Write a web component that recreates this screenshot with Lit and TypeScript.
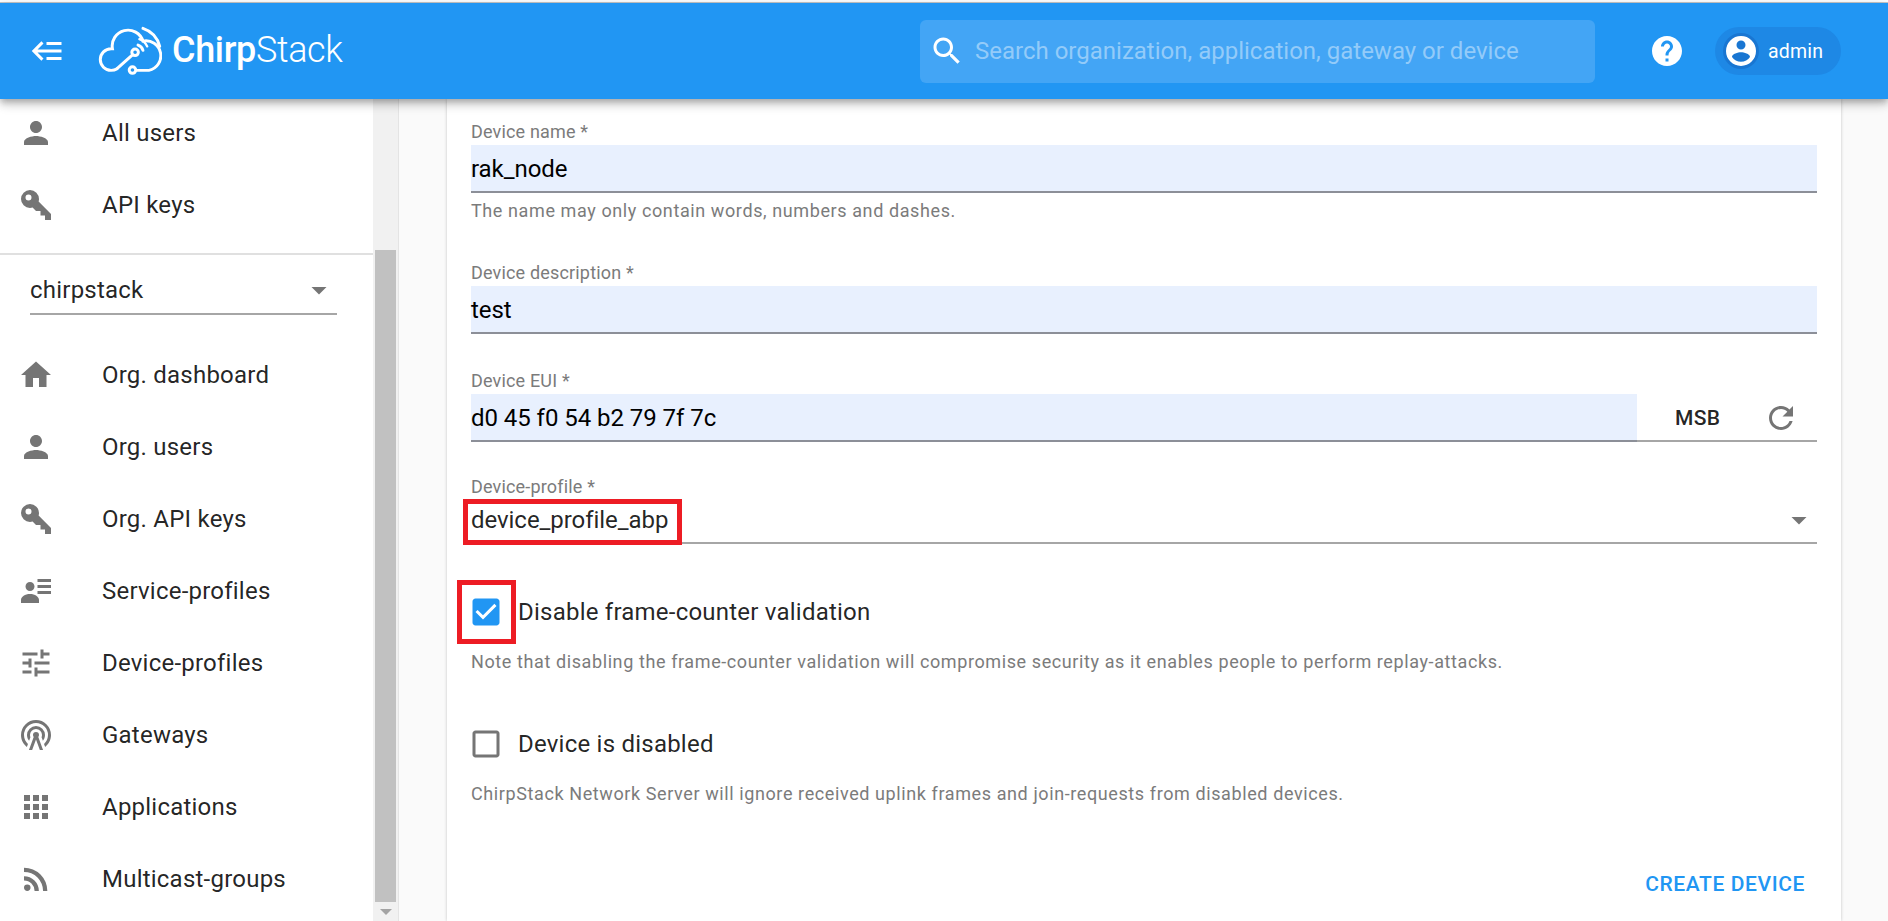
import { LitElement, html, css, svg } from "lit";
import { customElement } from "lit/decorators.js";

const P = {
  person: "M12 12c2.21 0 4-1.79 4-4s-1.79-4-4-4-4 1.79-4 4 1.79 4 4 4zm0 2c-2.67 0-8 1.34-8 4v2h16v-2c0-2.66-5.33-4-8-4z",
  key: "M22,18V22H18V19H15V16H12L9.74,13.74C9.19,13.91 8.61,14 8,14A6,6 0 0,1 2,8A6,6 0 0,1 8,2A6,6 0 0,1 14,8C14,8.61 13.91,9.19 13.74,9.74L22,18M7,5A2,2 0 0,0 5,7A2,2 0 0,0 7,9A2,2 0 0,0 9,7A2,2 0 0,0 7,5Z",
  home: "M10,20V14H14V20H19V12H22L12,3L2,12H5V20H10Z",
  details: "M11,9C11,10.66 9.66,12 8,12C6.34,12 5,10.66 5,9C5,7.34 6.34,6 8,6C9.66,6 11,7.34 11,9M14,20H2V18C2,15.79 4.69,14 8,14C11.31,14 14,15.79 14,18M22,12V14H13V12M22,8V10H13V8M22,4V6H13V4Z",
  tune: "M3 17v2h6v-2H3zM3 5v2h10V5H3zm10 16v-2h8v-2h-8v-2h-2v6h2zM7 9v2H3v2h4v2h2V9H7zm14 4v-2H11v2h10zm-6-4h2V7h4V5h-4V3h-2v6z",
  tower: "M12,10A2,2 0 0,1 14,12C14,12.5 13.82,12.94 13.53,13.29L16.7,22H14.57L12,14.93L9.43,22H7.3L10.47,13.29C10.18,12.94 10,12.5 10,12A2,2 0 0,1 12,10M12,8A4,4 0 0,0 8,12C8,12.5 8.1,13 8.28,13.46L7.4,15.86C6.53,14.81 6,13.47 6,12A6,6 0 0,1 12,6A6,6 0 0,1 18,12C18,13.47 17.47,14.81 16.6,15.86L15.72,13.46C15.9,13 16,12.5 16,12A4,4 0 0,0 12,8M12,4A8,8 0 0,0 4,12C4,14.36 5,16.5 6.64,17.94L5.92,19.94C3.54,18.11 2,15.23 2,12A10,10 0 0,1 12,2A10,10 0 0,1 22,12C22,15.23 20.46,18.11 18.08,19.94L17.36,17.94C19,16.5 20,14.36 20,12A8,8 0 0,0 12,4Z",
  apps: "M4 8h4V4H4v4zm6 12h4v-4h-4v4zm-6 0h4v-4H4v4zm0-6h4v-4H4v4zm6 0h4v-4h-4v4zm6-10v4h4V4h-4zm-6 4h4V4h-4v4zm6 6h4v-4h-4v4zm0 6h4v-4h-4v4z",
  rss: "M6.18 15.64a2.18 2.18 0 0 1 2.18 2.18C8.36 19 7.38 20 6.18 20 4.98 20 4 19 4 17.82a2.18 2.18 0 0 1 2.18-2.18M4 4.44A15.56 15.56 0 0 1 19.56 20h-2.83A12.73 12.73 0 0 0 4 7.27V4.44m0 5.66a9.9 9.9 0 0 1 9.9 9.9h-2.83A7.07 7.07 0 0 0 4 12.93V10.1z",
  refresh: "M17.65 6.35C16.2 4.9 14.21 4 12 4c-4.42 0-7.99 3.58-7.99 8s3.57 8 7.99 8c3.73 0 6.84-2.55 7.73-6h-2.08c-.82 2.33-3.04 4-5.65 4-3.31 0-6-2.69-6-6s2.69-6 6-6c1.66 0 3.14.69 4.22 1.78L13 11h7V4l-2.35 2.35z",
  help: "M12 2C6.48 2 2 6.48 2 12s4.48 10 10 10 10-4.48 10-10S17.52 2 12 2zm1 17h-2v-2h2v2zm2.07-7.75l-.9.92C13.45 12.9 13 13.5 13 15h-2v-.5c0-1.1.45-2.1 1.17-2.83l1.24-1.26c.37-.36.59-.86.59-1.41 0-1.1-.9-2-2-2s-2 .9-2 2H8c0-2.21 1.79-4 4-4s4 1.79 4 4c0 .88-.36 1.68-.93 2.25z",
  account: "M12,19.2C9.5,19.2 7.29,17.92 6,16C6.03,14 10,12.9 12,12.9C14,12.9 17.97,14 18,16C16.71,17.92 14.5,19.2 12,19.2M12,5A3,3 0 0,1 15,8A3,3 0 0,1 12,11A3,3 0 0,1 9,8A3,3 0 0,1 12,5M12,2A10,10 0 0,0 2,12A10,10 0 0,0 12,22A10,10 0 0,0 22,12A10,10 0 0,0 12,2Z",
  search: "M15.5 14h-.79l-.28-.27C15.41 12.59 16 11.11 16 9.5 16 5.91 13.09 3 9.5 3S3 5.91 3 9.5 5.91 16 9.5 16c1.61 0 3.09-.59 4.23-1.57l.27.28v.79l5 4.99L20.49 19l-4.99-5zm-6 0C7.01 14 5 11.99 5 9.5S7.01 5 9.5 5 14 7.01 14 9.5 11.99 14 9.5 14z",
  back: "M5,13L9,17L7.6,18.42L1.18,12L7.6,5.58L9,7L5,11H21V13H5M21,6V8H11V6H21M21,16V18H11V16H21Z",
  drop: "M7 10l5 5 5-5z",
  checked: "M19 3H5c-1.11 0-2 .9-2 2v14c0 1.1.89 2 2 2h14c1.11 0 2-.9 2-2V5c0-1.1-.89-2-2-2zm-9 14l-5-5 1.41-1.41L10 14.17l7.59-7.59L19 8l-9 9z",
  unchecked: "M19 5v14H5V5h14m0-2H5c-1.1 0-2 .9-2 2v14c0 1.1.9 2 2 2h14c1.1 0 2-.9 2-2V5c0-1.1-.9-2-2-2z",
};

const icon = (d: string, cls = "") =>
  html`<svg class="icon ${cls}" viewBox="0 0 24 24" aria-hidden="true"><path d=${d}></path></svg>`;

const logo = svg`<g fill="none" stroke="#fff" stroke-width="9" stroke-linecap="round">
  <path d="M352 196 L399 154"></path>
  <path d="M352 196 Q344 201 334 201 A33 33 0 0 1 334 135 L338 135 A48 48 0 0 1 431 112 A36 36 0 0 1 449 201 L411 201"></path>
  <circle cx="407" cy="146" r="10"></circle>
  <circle cx="399" cy="200" r="10"></circle>
  <path d="M416 124 A24 24 0 0 1 431 140"></path>
  <path d="M420 106 A42 42 0 0 1 444 128" stroke-width="7"></path>
  <path d="M431 73 A78 78 0 0 1 482 128"></path>
</g>`;

const topItems = [
  { i: P.person, t: "All users" },
  { i: P.key, t: "API keys" },
];
const orgItems = [
  { i: P.home, t: "Org. dashboard" },
  { i: P.person, t: "Org. users" },
  { i: P.key, t: "Org. API keys" },
  { i: P.details, t: "Service-profiles" },
  { i: P.tune, t: "Device-profiles" },
  { i: P.tower, t: "Gateways" },
  { i: P.apps, t: "Applications" },
  { i: P.rss, t: "Multicast-groups" },
];

@customElement("app-root")
export class AppRoot extends LitElement {
  static styles = css`
    :host {
      display: flex;
      flex-direction: column;
      width: 100%;
      height: 100vh;
      overflow: hidden;
      background: #fafafa;
      font-family: Roboto, "Liberation Sans", sans-serif;
      color: rgba(0, 0, 0, 0.87);
    }
    .icon { width: 36px; height: 36px; display: block; flex: none; fill: #757575; }
    .strip { height: 2px; background: #fff; border-bottom: 1px solid #c8c8c8; flex: none; }
    header {
      position: relative;
      z-index: 2;
      flex: none;
      height: 96px;
      background: #2196f3;
      display: flex;
      align-items: center;
      box-shadow: 0 3px 6px -1px rgba(0,0,0,.2), 0 6px 8px 0 rgba(0,0,0,.14), 0 2px 15px 0 rgba(0,0,0,.12);
      color: #fff;
    }
    header .icon { fill: #fff; }
    .menu { margin-left: 30px; }
    .logo { display: flex; align-items: center; margin-left: 32px; margin-top: -1px; }
    .logo svg { width: 64px; height: 49px; display: block; }
    .brand { margin-left: 10px; font-size: 36px; line-height: 48px; letter-spacing: -0.35px; margin-top: -2px; }
    .brand b { font-weight: 500; }
    .brand span { font-weight: 300; }
    .search {
      margin-left: auto;
      margin-right: 54px;
      width: 675px;
      height: 63px;
      border-radius: 6px;
      background: #43a5f5;
      display: flex;
      align-items: center;
      padding-left: 9px;
      box-sizing: border-box;
    }
    .search .ph { margin-left: 10px; font-size: 24px; color: #93cbf9; white-space: nowrap; }
    .chip {
      margin-left: 30px;
      margin-right: 47px;
      width: 126px;
      height: 48px;
      border-radius: 24px;
      background: #1e88e5;
      display: flex;
      align-items: center;
      box-sizing: border-box;
      padding-left: 8px;
    }
    .avatar { width: 36px; height: 36px; border-radius: 50%; background: #1976d2; }
    .chip .name { margin-left: 9px; font-size: 19.5px; letter-spacing: 0.2px; }
    .body {
      flex: 1;
      min-height: 0;
      display: grid;
      grid-template-columns: 373px 25px 1px 1fr;
    }
    nav {
      background: #fff;
      overflow: hidden;
      margin-top: -2px;
    }
    .row { height: 72px; display: flex; align-items: center; padding-left: 18px; }
    .row .label { margin-left: 48px; font-size: 24px; letter-spacing: 0.225px; white-space: nowrap; }
    hr { border: 0; height: 2px; background: #e0e0e0; margin: 12px 0 7px; }
    .orgsel {
      margin: 0 36px 24px 30px;
      height: 53px;
      box-sizing: border-box;
      padding-top: 8px;
      border-bottom: 2px solid #a6a6a6;
      display: flex;
      justify-content: space-between;
      align-items: flex-start;
      font-size: 24px;
      line-height: 40px;
      letter-spacing: 0.225px;
    }
    .orgsel .icon { margin-top: 2px; }
    .track { background: #f1f1f1; padding: 151px 2px 0; box-sizing: border-box; display: flex; flex-direction: column; align-items: stretch; }
    .thumb { height: 652px; background: #c1c1c1; flex: none; }
    .arrow { width: 0; height: 0; margin: 7px auto 0; border-left: 6px solid transparent; border-right: 6px solid transparent; border-top: 6px solid #a3a3a3; }
    .rule { background: #e4e4e4; }
    main { padding: 0 47px 0 48px; overflow: hidden; min-width: 0; }
    .card {
      background: #fff;
      height: 100%;
      box-sizing: border-box;
      padding: 19px 24px 0;
      box-shadow: 0 0 3px rgba(0,0,0,.22);
    }
    .flabel { height: 27px; line-height: 27px; font-size: 18px; letter-spacing: 0.17px; color: #7b7b7b; white-space: nowrap; }
    .input {
      height: 48px;
      box-sizing: border-box;
      background: #e8f0fe;
      border-bottom: 2px solid #8c8f98;
      font-size: 24px;
      line-height: 48px;
      letter-spacing: -0.05px;
      color: #000;
    }
    .helper { font-size: 18px; line-height: 24px; letter-spacing: 0.6px; color: #7b7b7b; white-space: nowrap; }
    .helper.under { margin-top: 6px; }
    .mt36 { margin-top: 36px; }
    .mt33 { margin-top: 33px; }
    .mt31 { margin-top: 31px; }
    .eui { display: flex; height: 48px; box-sizing: border-box; border-bottom: 2px solid #a6a6a6; align-items: stretch; }
    .eui .input { flex: 1; height: 48px; }
    .adorn { width: 180px; display: flex; align-items: center; padding-left: 38px; box-sizing: border-box; margin-bottom: -2px; }
    .msb { font-size: 21px; font-weight: 500; letter-spacing: 0.3px; color: rgba(0,0,0,.87); }
    .adorn .icon { margin-left: 43px; }
    .select {
      position: relative;
      height: 44px;
      box-sizing: border-box;
      border-bottom: 2px solid #a6a6a6;
      display: flex;
      justify-content: space-between;
      font-size: 24px;
      line-height: 40px;
      letter-spacing: -0.05px;
    }
    .select .icon { margin-top: 2px; }
    .mark { position: absolute; box-sizing: border-box; border: 5px solid #ed1c24; pointer-events: none; }
    .mark.m1 { left: -8px; top: -1px; width: 219px; height: 46px; }
    .mark.m2 { left: -14px; top: -8px; width: 59px; height: 64px; }
    .check { position: relative; height: 48px; display: flex; align-items: center; font-size: 24px; letter-spacing: 0.225px; }
    .check .icon { margin-left: -3px; margin-right: 14px; }
    .check .icon.on { fill: #2196f3; }
    .c1 { margin-top: 44px; }
    .c2 { margin-top: 46px; }
    .h1 { margin-top: 14px; }
    .h2 { margin-top: 14px; }
    .actions { display: flex; justify-content: flex-end; margin-top: 51px; }
    .create { padding-right: 12px; font-size: 21px; line-height: 54px; font-weight: 500; letter-spacing: 0.6px; color: #2196f3; }
  `;

  render() {
    return html`
      <div class="strip"></div>
      <header>
        ${icon(P.back, "menu")}
        <div class="logo">
          <svg viewBox="294 66 195 149" aria-hidden="true">${logo}</svg>
          <div class="brand"><b>Chirp</b><span>Stack</span></div>
        </div>
        <div class="search">
          ${icon(P.search)}
          <div class="ph">Search organization, application, gateway or device</div>
        </div>
        ${icon(P.help)}
        <div class="chip">
          <div class="avatar">${icon(P.account)}</div>
          <div class="name">admin</div>
        </div>
      </header>
      <div class="body">
        <nav>
          ${topItems.map((x) => html`<div class="row">${icon(x.i)}<div class="label">${x.t}</div></div>`)}
          <hr />
          <div class="orgsel"><span>chirpstack</span>${icon(P.drop)}</div>
          ${orgItems.map((x) => html`<div class="row">${icon(x.i)}<div class="label">${x.t}</div></div>`)}
        </nav>
        <div class="track"><div class="thumb"></div><div class="arrow"></div></div>
        <div class="rule"></div>
        <main>
          <div class="card">
            <div class="flabel">Device name *</div>
            <div class="input">rak_node</div>
            <div class="helper under">The name may only contain words, numbers and dashes.</div>

            <div class="flabel mt36">Device description *</div>
            <div class="input">test</div>

            <div class="flabel mt33">Device EUI *</div>
            <div class="eui">
              <div class="input">d0 45 f0 54 b2 79 7f 7c</div>
              <div class="adorn"><span class="msb">MSB</span>${icon(P.refresh)}</div>
            </div>

            <div class="flabel mt31">Device-profile *</div>
            <div class="select">
              <span>device_profile_abp</span>${icon(P.drop)}
              <div class="mark m1"></div>
            </div>

            <div class="check c1">
              ${icon(P.checked, "on")}<span>Disable frame-counter validation</span>
              <div class="mark m2"></div>
            </div>
            <div class="helper h1">Note that disabling the frame-counter validation will compromise security as it enables people to perform replay-attacks.</div>

            <div class="check c2">
              ${icon(P.unchecked)}<span>Device is disabled</span>
            </div>
            <div class="helper h2">ChirpStack Network Server will ignore received uplink frames and join-requests from disabled devices.</div>

            <div class="actions"><div class="create">CREATE DEVICE</div></div>
          </div>
        </main>
      </div>
    `;
  }
}
